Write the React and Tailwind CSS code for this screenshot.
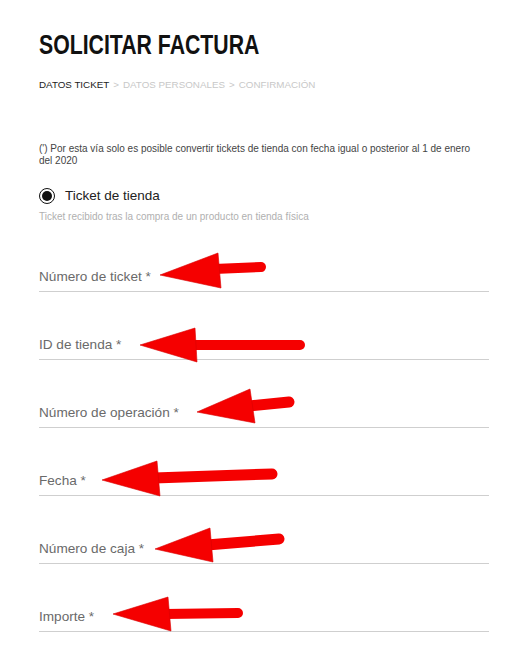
import React from "react";

const fields = [
  "Número de ticket *",
  "ID de tienda *",
  "Número de operación *",
  "Fecha *",
  "Número de caja *",
  "Importe *",
];

// red arrows drawn over the form
const arrows = [
  { tip: [160, 275], top: [218, 253], bot: [221, 288], from: [214, 269], to: [261, 267], w: 10 },
  { tip: [140, 345], top: [195, 328], bot: [197, 362], from: [191, 345], to: [300, 345], w: 10 },
  { tip: [197, 412], top: [250, 389], bot: [255, 423], from: [249, 406], to: [289, 402], w: 11 },
  { tip: [102, 480], top: [157, 461], bot: [160, 496], from: [154, 478], to: [272, 474], w: 11 },
  { tip: [155, 549], top: [210, 528], bot: [213, 562], from: [207, 545], to: [279, 539], w: 11 },
  { tip: [113, 614], top: [168, 597], bot: [171, 631], from: [165, 614], to: [238, 613], w: 10 },
];

function Arrows() {
  return (
    <svg className="absolute inset-0 pointer-events-none" width="517" height="665" viewBox="0 0 517 665">
      {arrows.map((a, i) => (
        <g key={i} fill="#f50000" stroke="#d80000" strokeWidth="0.6" strokeLinejoin="round">
          <line x1={a.from[0]} y1={a.from[1]} x2={a.to[0]} y2={a.to[1]} stroke="#f50000" strokeWidth={a.w} strokeLinecap="round" />
          <polygon points={`${a.tip.join(",")} ${a.top.join(",")} ${a.bot.join(",")}`} />
        </g>
      ))}
    </svg>
  );
}

export default function App() {
  return (
    <div className="relative w-[517px] h-[665px] bg-white overflow-hidden" style={{ fontFamily: '"Liberation Sans", Arial, sans-serif' }}>
      <div className="pl-[39px] w-[489px] pt-[30px]">
        <h1 className="text-[27px] leading-[30px] font-bold text-[#111] whitespace-nowrap origin-left scale-x-[0.787] inline-block">
          SOLICITAR FACTURA
        </h1>

        <div className="mt-[18px] text-[9.8px] leading-[12px] whitespace-nowrap flex">
          <span className="text-[#222]">DATOS TICKET</span>
          <span className="text-[#c8c8c8] mx-[4px]">&gt;</span>
          <span className="text-[#c8c8c8]">DATOS PERSONALES</span>
          <span className="text-[#c8c8c8] mx-[4px]">&gt;</span>
          <span className="text-[#c8c8c8]">CONFIRMACIÓN</span>
        </div>

        <p className="mt-[52px] text-[10px] leading-[12px] text-[#444] w-[445px]">
          (') Por esta vía solo es posible convertir tickets de tienda con fecha igual o posterior al 1 de enero del 2020
        </p>

        <div className="mt-[21px] flex items-center gap-[10px] h-[16px]">
          <span className="w-[16px] h-[16px] rounded-full border-[1.5px] border-[#111] flex items-center justify-center">
            <span className="w-[10px] h-[10px] rounded-full bg-[#111]" />
          </span>
          <span className="text-[13.5px] text-[#222]">Ticket de tienda</span>
        </div>

        <p className="mt-[7px] text-[10px] leading-[12px] text-[#b0b0b0]">
          Ticket recibido tras la compra de un producto en tienda física
        </p>

        <div className="mt-[46px] flex flex-col gap-[45px]">
          {fields.map((f) => (
            <div key={f} className="pb-[6px] border-b border-[#cfcfcf]">
              <div className="text-[13.6px] leading-[16px] text-[#6a6a6a]">{f}</div>
            </div>
          ))}
        </div>
      </div>
      <Arrows />
    </div>
  );
}
